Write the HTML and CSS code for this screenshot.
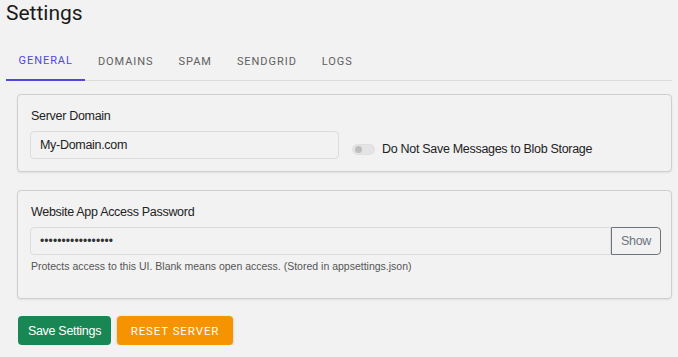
FILE: index.html
```html
<!DOCTYPE html>
<html>
<head>
<meta charset="utf-8">
<link rel="stylesheet" href="styles.css">
</head>
<body>
<div class="page">
  <h1 class="title">Settings</h1>
  <nav class="tabs">
    <div class="tab active">GENERAL</div>
    <div class="tab">DOMAINS</div>
    <div class="tab">SPAM</div>
    <div class="tab">SENDGRID</div>
    <div class="tab">LOGS</div>
  </nav>
  <div class="content">
    <section class="card">
      <div class="label">Server Domain</div>
      <div class="row">
        <div class="input domain">My-Domain.com</div>
        <div class="switch-wrap">
          <span class="switch"><span class="knob"></span></span>
          <span class="switch-label">Do Not Save Messages to Blob Storage</span>
        </div>
      </div>
    </section>
    <section class="card card2">
      <div class="label">Website App Access Password</div>
      <div class="group">
        <div class="input pw">•••••••••••••••••</div>
        <div class="show">Show</div>
      </div>
      <div class="help">Protects access to this UI. Blank means open access. (Stored in appsettings.json)</div>
    </section>
    <div class="actions">
      <button class="btn save">Save Settings</button>
      <button class="btn reset">RESET SERVER</button>
    </div>
  </div>
</div>
</body>
</html>
```
FILE: styles.css
```css
html, body { margin: 0; padding: 0; background: #f2f2f2; }
body { font-family: "Liberation Sans", Arial, sans-serif; color: #212529; }
.page { padding: 0 6px; }
.title { margin: 0; padding-top: 1px; font-family: Roboto, "Liberation Sans", sans-serif; font-weight: 400; font-size: 21px; line-height: 25px; color: #1a1a1a; }
.tabs { display: flex; margin-top: 18px; border-bottom: 1px solid #dcdcdc; height: 36px; }
.tab { font-family: Roboto, "Liberation Sans", sans-serif; font-size: 11px; font-weight: 400; letter-spacing: 0.95px; color: #606060; padding: 0 12.5px; line-height: 36px; }
.tab.active { color: #5146e1; border-bottom: 2px solid #5146e1; margin-bottom: -1px; line-height: 34px; }
.content { padding: 13px 0 0 12px; }
.card { border: 1px solid #cfcfcf; border-radius: 4px; background: #f2f2f2; box-shadow: 0 1px 2px rgba(0,0,0,0.08); padding: 13px 10px 12px 12px; margin-left: -1px; }
.card2 { margin-top: 18px; padding-bottom: 26px; }
.label { font-size: 12.5px; letter-spacing: -0.3px; color: #222; line-height: 16px; padding-left: 1px; }
.row { display: flex; align-items: center; margin-top: 7px; }
.input { box-sizing: border-box; height: 28px; border: 1px solid #dcdcdc; border-radius: 4px; background: #f2f2f2; font-size: 12.5px; letter-spacing: -0.3px; padding: 0 9px; line-height: 26px; color: #222; }
.domain { width: 309px; }
.switch-wrap { display: flex; align-items: center; margin-left: 13px; margin-top: 8px; }
.switch { width: 23px; height: 11px; border-radius: 6px; background: #e4e4e4; border: 1px solid #e0e0e0; position: relative; box-sizing: border-box; }
.knob { position: absolute; left: 2px; top: 1px; width: 7px; height: 7px; border-radius: 50%; background: #bdbdbd; }
.switch-label { font-size: 12.5px; letter-spacing: -0.3px; color: #222; margin-left: 7px; }
.group { display: flex; margin-top: 7px; }
.pw { flex: 1; border-radius: 4px 0 0 4px; font-size: 12px; letter-spacing: 0.1px; color: #333; }
.show { box-sizing: border-box; height: 28px; width: 50px; border: 1px solid #6c757d; border-radius: 0 4px 4px 0; font-size: 12.5px; letter-spacing: -0.3px; color: #6c757d; display: flex; align-items: center; justify-content: center; }
.help { font-size: 10.5px; color: #555; margin-top: 5px; padding-left: 1px; }
.actions { display: flex; gap: 6px; margin-top: 17px; }
.btn { border: none; border-radius: 4px; height: 29px; font-family: "Liberation Sans", Arial, sans-serif; cursor: pointer; white-space: nowrap; padding: 0; }
.save { background: #198754; color: #fff; font-size: 12.5px; letter-spacing: -0.3px; width: 93px; }
.reset { background: #f59400; color: #fff; font-family: Roboto, sans-serif; font-size: 11.5px; font-weight: 400; letter-spacing: 0.9px; width: 116px; box-shadow: 0 1px 3px rgba(0,0,0,0.2); }
```
